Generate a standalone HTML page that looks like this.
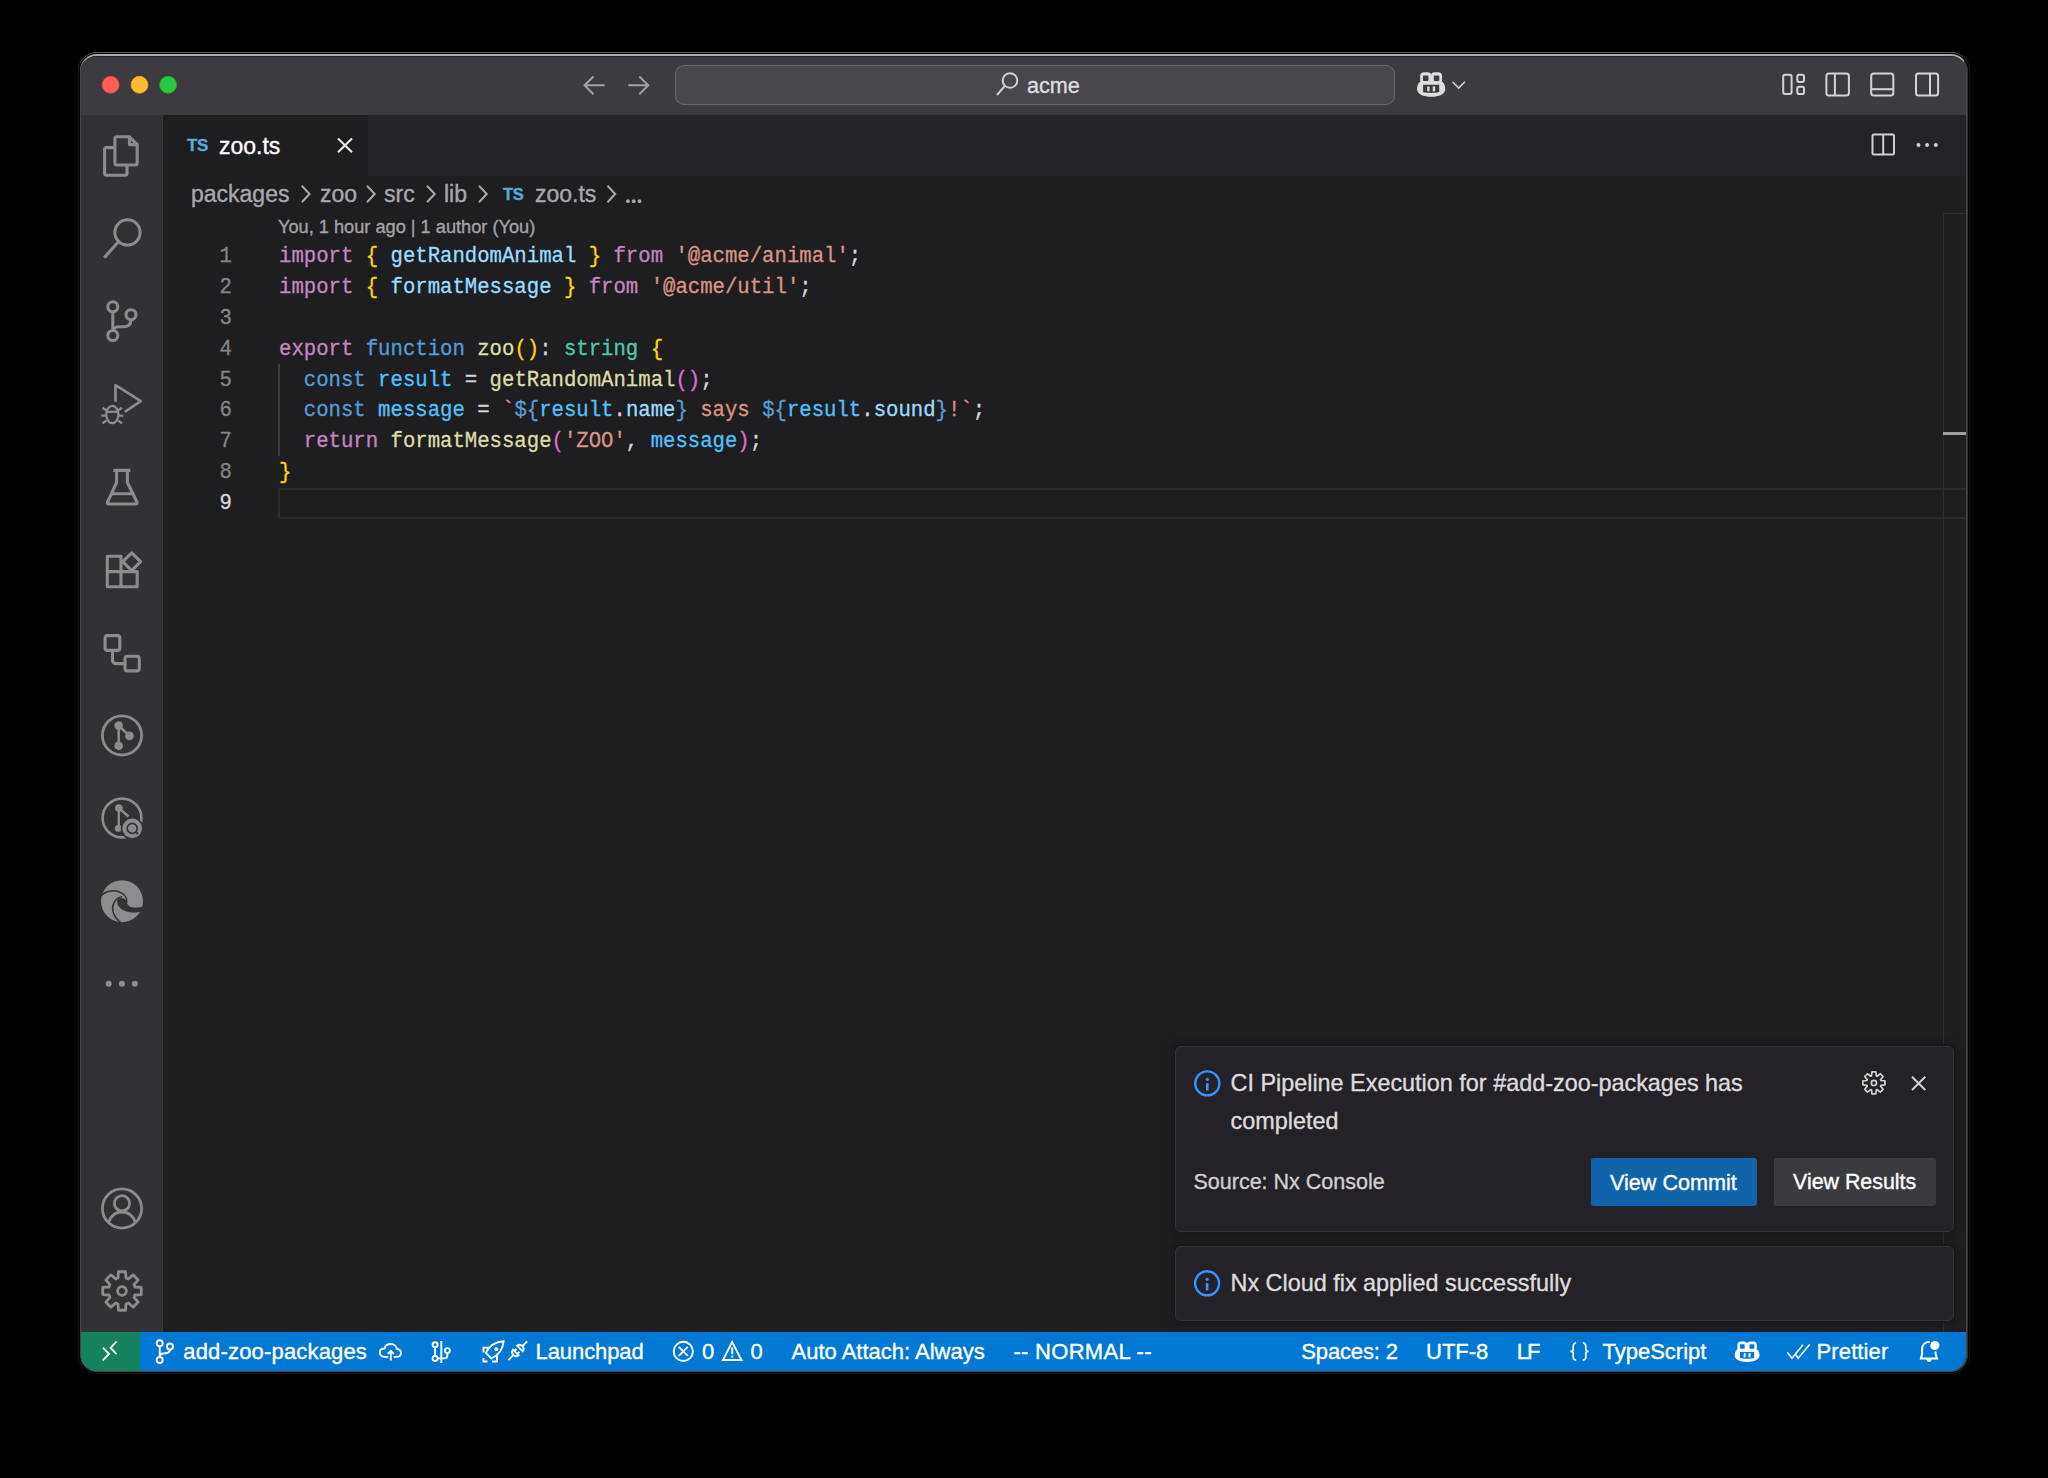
<!DOCTYPE html>
<html><head><meta charset="utf-8">
<style>
*{margin:0;padding:0;box-sizing:border-box}
html,body{width:2048px;height:1478px;background:#000;overflow:hidden}
body{position:relative;font-family:"Liberation Sans",sans-serif}
.a{position:absolute}
#f1{position:absolute;left:78px;top:52px;width:1892px;height:1322px;border-radius:19px;background:#141316;border-top:1px solid #5e5c60}
#f2{position:absolute;left:79px;top:53px;width:1890px;height:1320px;border-radius:18px;background:#000}
#f3{position:absolute;left:80px;top:54px;width:1888px;height:1318px;border-radius:17px;background:#48464a;border-top:2px solid #adabae;border-right:1px solid #333235}
#win{position:absolute;left:81px;top:56px;width:1885px;height:1315px;border-radius:16px;overflow:hidden;background:#1e1d20}
#title{position:absolute;left:0;top:0;width:1885px;height:59px;background:#3d3b3f;border-top:1px solid #252427}
#act{position:absolute;left:0;top:59px;width:82px;height:1217px;background:#333135;border-right:1.5px solid #38363a}
#tabs{position:absolute;left:82px;top:59px;width:1803px;height:61px;background:#252327}
#tab{position:absolute;left:0;top:0;width:205px;height:61px;background:#1e1d20}
#status{position:absolute;left:0;top:1276px;width:1885px;height:39px;background:#0078d4}
#remote{position:absolute;left:0;top:0;width:59px;height:39px;background:#16825d}
.t{position:absolute;white-space:pre;line-height:1;-webkit-text-stroke:0.35px currentColor}
.code{position:absolute;left:279px;font-family:"Liberation Mono",monospace;font-size:20.65px;line-height:30.85px;white-space:pre;color:#d4d4d4;-webkit-text-stroke:0.3px currentColor;height:30.85px;transform:scaleY(1.08);transform-origin:0 20.9px}
.ln{position:absolute;left:160px;width:72px;font-family:"Liberation Mono",monospace;font-size:20.65px;line-height:30.85px;color:#858585;text-align:right;height:30.85px;transform:scaleY(1.09);transform-origin:0 20.9px;-webkit-text-stroke:0.3px currentColor}
.kw{color:#c586c0}.br{color:#ffd700}.id{color:#9cdcfe}.st{color:#d89484}.fn{color:#dcdcaa}.sto{color:#569cd6}.ty{color:#4ec9b0}.cn{color:#4fc1ff}.b2{color:#da70d6}
.sb{font-size:22px;color:#fff;top:1341.3px}
.bc{font-size:23px;color:#a9a9ad;top:183.3px}
.nt{font-size:23.4px;color:#dcdbde}
#svg{position:absolute;left:0;top:0}
</style></head><body>
<div id="f1"></div><div id="f2"></div><div id="f3"></div>
<div id="win">
  <div id="title"></div>
  <div id="act"></div>
  <div id="tabs"><div id="tab"></div></div>
  <div id="status"><div id="remote"></div></div>
</div>

<!-- search box -->
<div class="a" style="left:675px;top:65px;width:720px;height:40px;border-radius:9px;background:#49474b;border:1.6px solid #69676b"></div>
<div class="t" style="left:1027px;top:74.9px;font-size:21.6px;color:#dddce0">acme</div>

<!-- tab -->
<div class="t" style="left:187px;top:137px;font-size:17px;font-weight:bold;color:#58aad6;letter-spacing:-0.3px">TS</div>
<div class="t" style="left:219px;top:134.8px;font-size:23px;color:#ffffff">zoo.ts</div>

<!-- breadcrumbs -->
<div class="t bc" style="left:191px">packages</div>
<div class="t bc" style="left:320px">zoo</div>
<div class="t bc" style="left:384px">src</div>
<div class="t bc" style="left:444px">lib</div>
<div class="t" style="left:503px;top:185.8px;font-size:16.5px;font-weight:bold;color:#58aad6;letter-spacing:-0.3px">TS</div>
<div class="t bc" style="left:535px">zoo.ts</div>


<!-- codelens -->
<div class="t" style="left:278px;top:218px;font-size:18.2px;color:#a3a2a6">You, 1 hour ago | 1 author (You)</div>

<!-- line numbers -->
<div class="ln" style="top:242.20px">1</div><div class="ln" style="top:273.05px">2</div><div class="ln" style="top:303.90px">3</div><div class="ln" style="top:334.75px">4</div><div class="ln" style="top:365.60px">5</div><div class="ln" style="top:396.45px">6</div><div class="ln" style="top:427.30px">7</div><div class="ln" style="top:458.15px">8</div><div class="ln" style="top:489.00px;color:#d8d8d8">9</div>

<!-- current line box -->
<div class="a" style="left:278px;top:488px;width:1688px;height:31px;border:2px solid #2b2a2e;border-right:none"></div>
<!-- indent guide -->
<div class="a" style="left:278px;top:364px;width:2px;height:92px;background:#3c3b3f"></div>

<!-- code -->
<div class="code" style="top:242.20px"><span class="kw">import</span> <span class="br">{</span> <span class="id">getRandomAnimal</span> <span class="br">}</span> <span class="kw">from</span> <span class="st">'@acme/animal'</span>;</div>
<div class="code" style="top:273.05px"><span class="kw">import</span> <span class="br">{</span> <span class="id">formatMessage</span> <span class="br">}</span> <span class="kw">from</span> <span class="st">'@acme/util'</span>;</div>
<div class="code" style="top:334.75px"><span class="kw">export</span> <span class="sto">function</span> <span class="fn">zoo</span><span class="br">()</span>: <span class="ty">string</span> <span class="br">{</span></div>
<div class="code" style="top:365.60px">  <span class="sto">const</span> <span class="cn">result</span> = <span class="fn">getRandomAnimal</span><span class="b2">()</span>;</div>
<div class="code" style="top:396.45px">  <span class="sto">const</span> <span class="cn">message</span> = <span class="st">`</span><span class="sto">${</span><span class="cn">result</span>.<span class="id">name</span><span class="sto">}</span><span class="st"> says </span><span class="sto">${</span><span class="cn">result</span>.<span class="id">sound</span><span class="sto">}</span><span class="st">!`</span>;</div>
<div class="code" style="top:427.30px">  <span class="kw">return</span> <span class="fn">formatMessage</span><span class="b2">(</span><span class="st">'ZOO'</span>, <span class="cn">message</span><span class="b2">)</span>;</div>
<div class="code" style="top:458.15px"><span class="br">}</span></div>


<!-- scrollbar -->
<div class="a" style="left:1943px;top:213px;width:1px;height:1119px;background:#2e2d31"></div>
<div class="a" style="left:1943px;top:213px;width:23px;height:1px;background:#2e2d31"></div>
<div class="a" style="left:1943px;top:432px;width:23px;height:3px;background:#a0a0a0"></div>

<!-- notifications -->
<div class="a" style="left:1175px;top:1046px;width:779px;height:185.5px;border-radius:6px;background:#242226;border:1px solid #333236;box-shadow:0 0 9px rgba(0,0,0,.5)"></div>
<div class="a" style="left:1175px;top:1246px;width:779px;height:74.8px;border-radius:6px;background:#242226;border:1px solid #333236;box-shadow:0 0 9px rgba(0,0,0,.5)"></div>
<div class="t nt" style="left:1230.5px;top:1072.4px">CI Pipeline Execution for #add-zoo-packages has</div>
<div class="t nt" style="left:1230.5px;top:1110.3px">completed</div>
<div class="t" style="left:1193.5px;top:1171.5px;font-size:21.5px;color:#cfced1">Source: Nx Console</div>
<div class="a" style="left:1591px;top:1158px;width:166px;height:48px;border-radius:3px;background:#1164a9"></div>
<div class="t" style="left:1610px;top:1171.5px;font-size:21.6px;color:#fff">View Commit</div>
<div class="a" style="left:1774px;top:1158px;width:162px;height:48px;border-radius:3px;background:#3a3a3f"></div>
<div class="t" style="left:1793px;top:1171.5px;font-size:21.4px;color:#fff">View Results</div>
<div class="t nt" style="left:1230.5px;top:1272px">Nx Cloud fix applied successfully</div>

<!-- status bar text -->
<div class="t sb" style="left:183.3px;letter-spacing:0.17px">add-zoo-packages</div>
<div class="t sb" style="left:535.6px;letter-spacing:-0.1px">Launchpad</div>
<div class="t sb" style="left:702px">0</div>
<div class="t sb" style="left:750.5px">0</div>
<div class="t sb" style="left:791.5px">Auto Attach: Always</div>
<div class="t sb" style="left:1013.4px;letter-spacing:0.3px">-- NORMAL --</div>
<div class="t sb" style="left:1301.3px;letter-spacing:-0.15px">Spaces: 2</div>
<div class="t sb" style="left:1426px">UTF-8</div>
<div class="t sb" style="left:1516.8px;letter-spacing:-2px">LF</div>
<div class="t sb" style="left:1602.5px">TypeScript</div>
<div class="t sb" style="left:1816.6px;letter-spacing:0.1px">Prettier</div>

<svg id="svg" width="2048" height="1478" viewBox="0 0 2048 1478">
<!-- traffic lights -->
<circle cx="110.6" cy="84.8" r="8.5" fill="#fe5f57" stroke="#e14640" stroke-width="0.8"/>
<circle cx="139.5" cy="84.8" r="8.5" fill="#febc2e" stroke="#dfa023" stroke-width="0.8"/>
<circle cx="168.1" cy="84.8" r="8.5" fill="#28c840" stroke="#1dad2b" stroke-width="0.8"/>
<!-- nav arrows -->
<g fill="none" stroke="#a3a2a5" stroke-width="2">
<path d="M604.5,85.3 H584.5 M593.5,76.5 L584.5,85.3 L593.5,94.2"/>
<path d="M628.3,85.3 H648.3 M639.3,76.5 L648.3,85.3 L639.3,94.2"/>
</g>
<!-- search icon -->
<g fill="none" stroke="#d0cfd2" stroke-width="2">
<circle cx="1010" cy="80.5" r="7.3"/>
<path d="M1004.8,85.8 L997,95"/>
</g>
<!-- copilot title -->
<g transform="translate(1417.1,72) scale(1.133,1.2)">
<rect x="2.7" y="0.2" width="10" height="10" rx="3.5" fill="#dddcdf"/>
<rect x="12.1" y="0.2" width="10" height="10" rx="3.5" fill="#dddcdf"/>
<path fill="#dddcdf" d="M3,8 C0.9,9.2 0,11.5 0,14.3 C0,18.5 5.5,20.6 12.4,20.6 C19.3,20.6 24.8,18.5 24.8,14.3 C24.8,11.5 23.9,9.2 21.8,8 Z"/>
<rect x="5.2" y="3.0" width="4.8" height="4.4" rx="0.8" fill="#3d3b3f"/>
<rect x="14.8" y="3.0" width="4.8" height="4.4" rx="0.8" fill="#3d3b3f"/>
<path fill="#3d3b3f" d="M5.3,10.6 H19.5 V16.7 C16,17.7 8.8,17.7 5.3,16.7Z"/>
<rect x="8.9" y="11.8" width="2.1" height="4.4" rx="1" fill="#dddcdf"/>
<rect x="13.8" y="11.8" width="2.1" height="4.4" rx="1" fill="#dddcdf"/>
</g>
<path d="M1452.5,81.8 L1458.7,88 L1464.9,81.8" fill="none" stroke="#d0cfd2" stroke-width="1.6"/>
<!-- layout icons -->
<g fill="none" stroke="#d3d2d5" stroke-width="2">
<rect x="1783.2" y="74.8" width="8.4" height="19.2" rx="2"/>
<rect x="1797.3" y="74.8" width="6.7" height="7.1" rx="1.8"/>
<rect x="1797.3" y="86.8" width="6.7" height="7.2" rx="1.8"/>
<rect x="1826.4" y="73.6" width="22.5" height="22" rx="2.5"/><path d="M1834.9,73.6 V95.6"/>
<rect x="1871.2" y="73.6" width="22.1" height="22" rx="2.5"/><path d="M1871.2,89.2 H1893.3"/>
<rect x="1916" y="73.6" width="22.1" height="22" rx="2.5"/><path d="M1930,73.6 V95.6"/>
</g>
<!-- editor actions -->
<g fill="none" stroke="#cfced1" stroke-width="2">
<rect x="1872.5" y="134.5" width="21.5" height="20" rx="1.5"/><path d="M1883.2,134.5 V154.5"/>
</g>
<g fill="#cfced1"><circle cx="1918.5" cy="145" r="2"/><circle cx="1927.1" cy="145" r="2"/><circle cx="1935.8" cy="145" r="2"/></g>
<g fill="#a9a9ad"><circle cx="627.9" cy="201.2" r="1.9"/><circle cx="633.7" cy="201.2" r="1.9"/><circle cx="639.5" cy="201.2" r="1.9"/></g>
<!-- tab close -->
<path d="M338,138.5 L352,152.3 M352,138.5 L338,152.3" stroke="#e6e6e6" stroke-width="2.2" fill="none"/>
<!-- breadcrumb chevrons -->
<g fill="none" stroke="#a9a9ad" stroke-width="2"><path d="M301.8,185.8 L309.5,194 L301.8,202.2"/><path d="M367,185.8 L374.7,194 L367,202.2"/><path d="M427,185.8 L434.7,194 L427,202.2"/><path d="M479,185.8 L486.7,194 L479,202.2"/><path d="M607.5,185.8 L615.2,194 L607.5,202.2"/></g>

<!-- activity bar icons -->
<g fill="none" stroke="#8c8b8e" stroke-width="3.1" stroke-linejoin="round">
 <!-- explorer -->
 <path d="M116.5,136.8 H129.5 L137.2,144.6 V163 Q137.2,165 135.2,165 H116.9 Q114.9,165 114.9,163 V138.8 Q114.9,136.8 116.9,136.8Z"/>
 <path d="M129.5,136.8 V144.6 H137.2"/>
 <path d="M114.9,147.6 H106.6 Q104.6,147.6 104.6,149.6 V173.3 Q104.6,175.3 106.6,175.3 H125 Q127,175.3 127,173.3 V165"/>
 <!-- search -->
 <circle cx="127.5" cy="232.4" r="12.6"/>
 <path d="M118.6,241.4 L104.2,257.8" stroke-linecap="butt"/>
 <!-- scm -->
 <circle cx="112.8" cy="306.8" r="5"/>
 <circle cx="131" cy="314.7" r="5"/>
 <circle cx="112.8" cy="335.5" r="5"/>
 <path d="M112.8,311.8 V330.5"/>
 <path d="M131,319.7 C131,325 128,326.8 123,326.8 H119 C115,326.8 112.8,329 112.8,331"/>
 <!-- run debug -->
 <path d="M115.5,401.8 V385.2 L140.8,401.1 L124.8,411.8" stroke-width="2.7"/>
 <!-- beaker -->
 <path d="M113.2,470.4 H130.5 M116.6,470.4 V482.5 L107.6,502 Q106.8,504 109,504 H135.5 Q137.7,504 136.9,502 L127.4,482.5 V470.4 M111.2,493.8 H132.8"/>
 <!-- extensions -->
 <path d="M107.3,556.3 H121 V586.7 H107.3Z M107.3,571.6 H137.2 V586.7 H121"/>
 <path d="M131.7,552.8 L140.6,561.7 L131.7,570.6 L122.8,561.7Z"/>
 <!-- nx -->
 <rect x="105.1" y="635.6" width="14.7" height="14.8" rx="2.5"/>
 <rect x="125" y="656.3" width="14.3" height="14.6" rx="2.5"/>
 <path d="M112.5,650.4 V660 Q112.5,663.6 116,663.6 H125"/>
 <!-- git circle -->
 <circle cx="122" cy="735.4" r="19.6" stroke-width="2.8"/>
 <path d="M118.7,725.6 V745.7 M118.7,725.6 L129.5,735.9" stroke-width="2.6"/>
 <!-- inspect circle -->
 <circle cx="122" cy="818" r="19.4" stroke-width="2.6"/>
 <path d="M118.8,808 V828.4 M118.8,808 L128.5,816.5" stroke-width="2.4"/>
 <!-- account -->
 <circle cx="122" cy="1208.5" r="19.6" stroke-width="2.8"/>
 <circle cx="122" cy="1203.3" r="7.6" stroke-width="2.8"/>
 <path d="M108.5,1222.5 C111,1215 116,1212 122,1212 C128,1212 133,1215 135.5,1222.5" stroke-width="2.8"/>
 <!-- settings -->
 <circle cx="122" cy="1291" r="4.4" stroke-width="2.8"/>
</g>
<g fill="#8c8b8e">
 <circle cx="118.7" cy="725.6" r="4.3"/><circle cx="118.7" cy="745.7" r="4.3"/><circle cx="129.5" cy="735.9" r="4.3"/>
 <circle cx="118.8" cy="808" r="3.8"/><circle cx="118.3" cy="828.4" r="3.4"/>
 <circle cx="132.2" cy="828.4" r="11.3" fill="#333135"/><circle cx="132.2" cy="828.4" r="9.8"/>
 <circle cx="108.7" cy="983.7" r="3"/><circle cx="121.9" cy="983.7" r="3"/><circle cx="134.8" cy="983.7" r="3"/>
</g>
<circle cx="132.2" cy="828.4" r="5" fill="none" stroke="#333135" stroke-width="1.6"/>
<path d="M135.8,832 L138,834.2" stroke="#333135" stroke-width="1.8"/>
<!-- bug -->
<g fill="none" stroke="#8c8b8e" stroke-width="2.3">
 <ellipse cx="112.3" cy="414.5" rx="6.1" ry="8.7"/>
 <path d="M106.5,411.8 H118.1"/>
 <path d="M102.5,407.8 L106.3,410.3 M122,407.8 L118.3,410.3 M101.3,415.6 H106 M118.6,415.6 H123.3 M102.5,423.3 L106.3,420.6 M122,423.3 L118.3,420.6"/>
</g>
<!-- edge -->
<circle cx="122" cy="901.2" r="21" fill="#8c8b8e"/>
<g fill="none" stroke="#333135" stroke-width="1.5">
<path d="M101.5,895.5 C106,890.5 116,889 122.5,893.5 C126,896 127.2,899.5 126.6,903"/>
<path d="M122.2,896.6 C114.5,898.5 111.5,905.5 113,911.5 C114,916 117,919.5 120.5,922.5"/>
</g>
<path fill="#333135" d="M117.2,900.5 C119,897.2 124.5,897 126.4,901 C127.4,904.5 128.5,907.2 133.5,907.6 C137.5,907.9 141,907.3 143.5,906.6 L142.6,911.2 C137.5,912.8 131,913.2 125.5,911.2 C120,909.2 116.5,905 117.2,900.5 Z"/>
<!-- gear -->
<path fill="none" stroke="#8c8b8e" stroke-width="2.8" stroke-linejoin="round" d="M118.02,1277.99 L118.43,1271.73 L125.57,1271.73 L125.98,1277.99 A13.6,13.6 0 0 1 128.38,1278.99 L133.10,1274.85 L138.15,1279.90 L134.01,1284.62 A13.6,13.6 0 0 1 135.01,1287.02 L141.27,1287.43 L141.27,1294.57 L135.01,1294.98 A13.6,13.6 0 0 1 134.01,1297.38 L138.15,1302.10 L133.10,1307.15 L128.38,1303.01 A13.6,13.6 0 0 1 125.98,1304.01 L125.57,1310.27 L118.43,1310.27 L118.02,1304.01 A13.6,13.6 0 0 1 115.62,1303.01 L110.90,1307.15 L105.85,1302.10 L109.99,1297.38 A13.6,13.6 0 0 1 108.99,1294.98 L102.73,1294.57 L102.73,1287.43 L108.99,1287.02 A13.6,13.6 0 0 1 109.99,1284.62 L105.85,1279.90 L110.90,1274.85 L115.62,1278.99 A13.6,13.6 0 0 1 118.02,1277.99 Z"/>

<!-- status bar icons -->
<g fill="none" stroke="#fff" stroke-width="1.9">
 <path d="M102.9,1347.6 L109.1,1354 L102.7,1360.3 M116.5,1341.5 L110.6,1347.8 L116.5,1354.1" stroke-width="1.8"/>
 <circle cx="159.7" cy="1343.2" r="3"/><circle cx="170" cy="1346.5" r="3"/><circle cx="159.7" cy="1360" r="3"/>
 <path d="M159.7,1346.2 V1357 M170,1349.5 C170,1353 166,1353.5 163,1353.5 C161,1353.5 159.7,1355 159.7,1357"/>
 <path d="M388.4,1356.9 H385 C381.5,1356.9 379.8,1354.5 379.8,1352.5 C379.8,1350 381.8,1348.5 384.5,1348.5 C385.2,1345.5 387.8,1344 390.8,1344 C393.8,1344 396.5,1346 396.8,1349 C399.5,1349.2 401,1351 401,1353 C401,1355.2 399.2,1356.9 396.8,1356.9 H393.7 M390.8,1360.6 V1351.2 M387.8,1353.8 L390.8,1350.8 L393.8,1353.8"/>
 <circle cx="435.1" cy="1344.8" r="2.5"/><circle cx="435.1" cy="1358.4" r="2.5"/><circle cx="447.4" cy="1350.6" r="2.5"/><path d="M435.1,1347.3 V1355.9 M441.3,1341.1 V1362.9 M447.4,1353.1 V1355.5 C447.4,1357.5 446,1358.4 444,1358.4 H437.6"/>
 <path d="M503.6,1341.3 C496,1342 489,1346 485.9,1352.9 L491.4,1358.4 C498.5,1355.3 502.8,1349 503.6,1341.3Z M490.5,1347.6 H483.5 V1352.6 M497,1356 V1361.5 H492 M483.5,1358 V1361.5 H487.5"/>
 <path d="M517.1,1345.7 L522.7,1351.3 A4,4 0 0 0 517.1,1345.7Z M522.7,1345.7 L527.2,1341.4 M513,1349.7 L518.6,1355.3 A4,4 0 0 1 513,1349.7Z M514.3,1351 L516.5,1348.8 M517.3,1354 L519.5,1351.8 M513,1355.3 L508.4,1360.1"/>
 <circle cx="683.3" cy="1351.4" r="9.6"/>
 <path d="M678.8,1346.9 L687.8,1355.9 M687.8,1346.9 L678.8,1355.9"/>
 <path d="M732.2,1342 L723,1360 H741.5Z"/>
 <path stroke-width="1.6" d="M1576.2,1342.7 C1574,1343 1573.2,1344.5 1573.2,1346.5 V1349.2 C1573.2,1350.5 1572,1351.4 1570.5,1351.4 C1572,1351.4 1573.2,1352.3 1573.2,1353.6 V1357.3 C1573.2,1359 1574,1360 1576.2,1360.1 M1582.8,1342.7 C1585,1343 1585.8,1344.5 1585.8,1346.5 V1349.2 C1585.8,1350.5 1587,1351.4 1588.5,1351.4 C1587,1351.4 1585.8,1352.3 1585.8,1353.6 V1357.3 C1585.8,1359 1585,1360 1582.8,1360.1"/>
 <path stroke-width="1.6" d="M1787.2,1352.3 L1792,1358.2 L1803,1344.8 M1795.5,1354.5 L1798.2,1358.2 L1809.6,1344.6"/>
 <path stroke-width="2" d="M1929.7,1341.7 C1925,1342 1922.1,1345 1922.1,1349 V1354 L1920.9,1358.5 H1937 L1935.6,1354 V1351.5"/>
</g>
<g fill="#fff">
 <path d="M731.3,1347.5 H733.2 V1354.2 H731.3Z M731.3,1355.8 H733.2 V1357.6 H731.3Z"/>
 <circle cx="1934.8" cy="1345.5" r="4.6"/><circle cx="496.2" cy="1349.3" r="2"/>
 <path d="M1926.6,1359 H1931.5 C1931.5,1361 1930.5,1361.9 1929,1361.9 C1927.5,1361.9 1926.6,1361 1926.6,1359Z"/>
</g>
<g transform="translate(1734.7,1341.3) scale(1,1)">
<rect x="2.7" y="0.2" width="10" height="10" rx="3.5" fill="#fff"/>
<rect x="12.1" y="0.2" width="10" height="10" rx="3.5" fill="#fff"/>
<path fill="#fff" d="M3,8 C0.9,9.2 0,11.5 0,14.3 C0,18.5 5.5,20.6 12.4,20.6 C19.3,20.6 24.8,18.5 24.8,14.3 C24.8,11.5 23.9,9.2 21.8,8 Z"/>
<rect x="5.2" y="3.0" width="4.8" height="4.4" rx="0.8" fill="#0078d4"/>
<rect x="14.8" y="3.0" width="4.8" height="4.4" rx="0.8" fill="#0078d4"/>
<path fill="#0078d4" d="M5.3,10.6 H19.5 V16.7 C16,17.7 8.8,17.7 5.3,16.7Z"/>
<rect x="8.9" y="11.8" width="2.1" height="4.4" rx="1" fill="#fff"/>
<rect x="13.8" y="11.8" width="2.1" height="4.4" rx="1" fill="#fff"/>
</g>

<!-- notification icons -->
<g fill="none" stroke="#3794ff" stroke-width="2.4">
 <circle cx="1207.3" cy="1083.4" r="12"/>
 <circle cx="1207.1" cy="1283.3" r="12"/>
</g>
<g fill="#3794ff">
 <rect x="1206" y="1083.2" width="2.6" height="7.3" /><circle cx="1207.3" cy="1079.4" r="1.6"/>
 <rect x="1205.8" y="1283.1" width="2.6" height="7.3" /><circle cx="1207.1" cy="1279.3" r="1.6"/>
</g>
<path d="M1912,1076.7 L1925.3,1090 M1925.3,1076.7 L1912,1090" stroke="#d0cfd2" stroke-width="2" fill="none"/>
<g fill="none" stroke="#d0cfd2" stroke-width="1.7" stroke-linejoin="round"><path d="M1871.49,1075.90 L1871.96,1071.87 L1875.84,1071.87 L1876.31,1075.90 A7.4,7.4 0 0 1 1877.14,1076.25 L1880.32,1073.73 L1883.07,1076.48 L1880.55,1079.66 A7.4,7.4 0 0 1 1880.90,1080.49 L1884.93,1080.96 L1884.93,1084.84 L1880.90,1085.31 A7.4,7.4 0 0 1 1880.55,1086.14 L1883.07,1089.32 L1880.32,1092.07 L1877.14,1089.55 A7.4,7.4 0 0 1 1876.31,1089.90 L1875.84,1093.93 L1871.96,1093.93 L1871.49,1089.90 A7.4,7.4 0 0 1 1870.66,1089.55 L1867.48,1092.07 L1864.73,1089.32 L1867.25,1086.14 A7.4,7.4 0 0 1 1866.90,1085.31 L1862.87,1084.84 L1862.87,1080.96 L1866.90,1080.49 A7.4,7.4 0 0 1 1867.25,1079.66 L1864.73,1076.48 L1867.48,1073.73 L1870.66,1076.25 A7.4,7.4 0 0 1 1871.49,1075.90 Z"/><circle cx="1873.9" cy="1082.9" r="2.6"/></g>
</svg>
</body></html>
